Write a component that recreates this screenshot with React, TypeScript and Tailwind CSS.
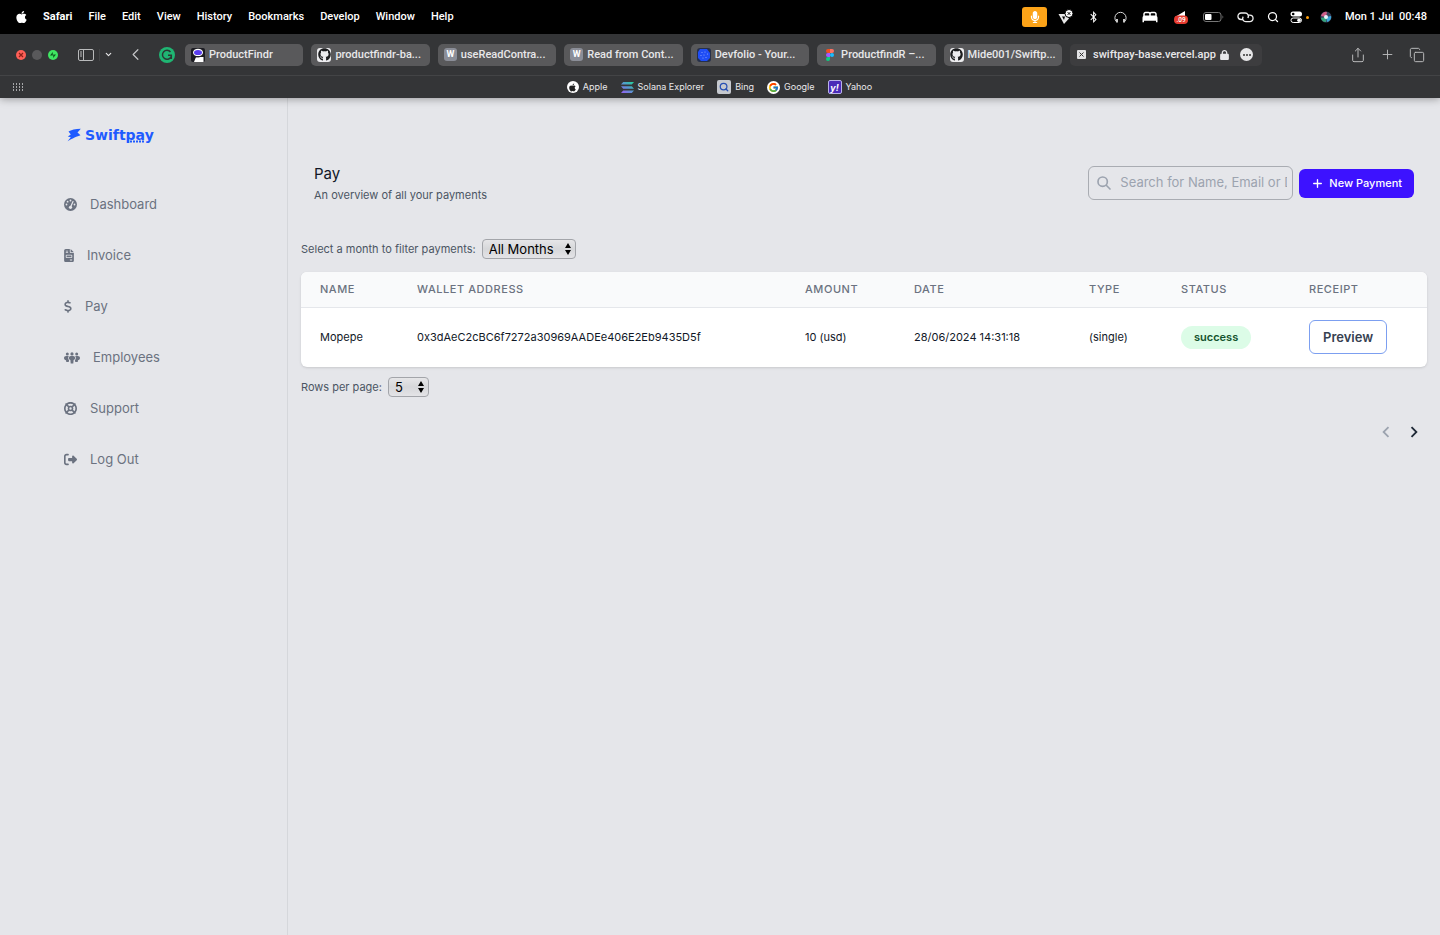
import { memo, useState } from "react";
import type { ReactNode } from "react";
import {
  FaApple,
  FaBluetoothB,
  FaDollarSign,
  FaFileInvoice,
  FaGithub,
  FaLifeRing,
  FaLock,
  FaMicrophone,
  FaRightFromBracket,
} from "react-icons/fa6";
import { FcGoogle } from "react-icons/fc";
import { HiOutlineSearch } from "react-icons/hi";
import { MdBed, MdChevronLeft, MdChevronRight } from "react-icons/md";
import { ChevronDown, ChevronLeft, Copy, Plus, Search, Share } from "lucide-react";

const menus = ["File", "Edit", "View", "History", "Bookmarks", "Develop", "Window", "Help"];

const GithubBadge = () => (
  <span className="flex size-[14px] items-center justify-center rounded-[3px] bg-[#ececee]">
    <FaGithub className="size-[13px] text-[#1d1e20]" />
  </span>
);

const LetterBadge = () => (
  <span className="flex size-[13px] items-center justify-center rounded-[3px] bg-[#8b8e98] text-[9px] font-bold text-white">
    W
  </span>
);

const ProductFindrLogo = () => (
  <svg viewBox="0 0 14 14" className="size-[14px]">
    <rect width="14" height="14" rx="2" fill="#1c1c22" />
    <path d="M5 9h7.500v5H3z" fill="#fff" />
    <ellipse cx="7" cy="4.500" rx="5" ry="3.800" fill="#fff" />
    <ellipse cx="7" cy="4.500" rx="4" ry="2.600" fill="#5a3df0" />
    <path d="M3 8.800h5.500" stroke="#1c1c22" strokeWidth="1.200" />
  </svg>
);

const DevfolioLogo = () => (
  <svg viewBox="0 0 14 14" className="size-[14px]">
    <rect width="14" height="14" rx="3" fill="#26304a" />
    <path d="M3 1h7l3 4v5l-3 3H4l-3-3V4z" fill="#1f4df5" />
    <g fill="#8ea7ff">
      <circle cx="5" cy="4.5" r=".6" />
      <circle cx="8" cy="4" r=".6" />
      <circle cx="10.5" cy="6" r=".6" />
      <circle cx="4" cy="7.5" r=".6" />
      <circle cx="7" cy="7" r=".6" />
      <circle cx="9" cy="9.5" r=".6" />
      <circle cx="6" cy="10" r=".6" />
    </g>
  </svg>
);

const FigmaLogo = () => (
  <svg viewBox="0 0 14 14" className="size-[14px]">
    <path d="M7 1H5a2 2 0 0 0 0 4h2z" fill="#f24e1e" />
    <path d="M7 1h2a2 2 0 0 1 0 4H7z" fill="#ff7262" />
    <path d="M7 5H5a2 2 0 0 0 0 4h2z" fill="#a259ff" />
    <circle cx="9" cy="7" r="2" fill="#1abcfe" />
    <path d="M7 9H5a2 2 0 1 0 2 2z" fill="#0acf83" />
  </svg>
);

const SolanaLogo = () => (
  <svg viewBox="0 0 13 11" className="h-[11px] w-[13px]">
    <defs>
      <linearGradient id="solana" x1="0" y1="1" x2="1" y2="0">
        <stop offset="0" stopColor="#9b5cf6" />
        <stop offset=".5" stopColor="#5a94d0" />
        <stop offset="1" stopColor="#1fd69a" />
      </linearGradient>
    </defs>
    <path
      d="M2.2 0H13l-2.2 2.6H0zM0 4.2h10.8L13 6.8H2.2zM2.2 8.4H13L10.8 11H0z"
      fill="url(#solana)"
    />
  </svg>
);

const tabs: { title: string; icon: ReactNode }[] = [
  { title: "ProductFindr", icon: <ProductFindrLogo /> },
  { title: "productfindr-ba...", icon: <GithubBadge /> },
  { title: "useReadContra...", icon: <LetterBadge /> },
  { title: "Read from Cont...", icon: <LetterBadge /> },
  { title: "Devfolio - Your...", icon: <DevfolioLogo /> },
  { title: "ProductfindR –...", icon: <FigmaLogo /> },
  { title: "Mide001/Swiftp...", icon: <GithubBadge /> },
];

const favourites: { title: string; icon: ReactNode }[] = [
  {
    title: "Apple",
    icon: (
      <span className="flex size-3 items-center justify-center rounded-full bg-white">
        <FaApple className="size-[9px] text-[#222]" />
      </span>
    ),
  },
  { title: "Solana Explorer", icon: <SolanaLogo /> },
  {
    title: "Bing",
    icon: (
      <span className="flex size-[14px] items-center justify-center rounded-xs bg-[#c6c9cf]">
        <Search className="size-[10px] text-[#2850b4]" strokeWidth={3} />
      </span>
    ),
  },
  {
    title: "Google",
    icon: (
      <span className="flex size-[13px] items-center justify-center rounded-full bg-white">
        <FcGoogle className="size-[11px]" />
      </span>
    ),
  },
  {
    title: "Yahoo",
    icon: (
      <span className="flex size-[14px] items-center justify-center rounded-xs border border-[#b9b2e8] bg-[#4a2bb8] text-[9px] leading-none font-bold text-white italic">
        y!
      </span>
    ),
  },
];

const MenuBar = memo(() => (
  <div className="flex h-[34px] items-center justify-between bg-black pr-[13px] pl-4 font-['Roboto','Inter',sans-serif] text-[11px] font-medium text-white">
    <nav className="flex items-center gap-4" aria-label="Menu bar">
      <FaApple className="h-[14px] w-[11px]" />
      <button className="pt-px font-bold">Safari</button>
      {menus.map((menu) => (
        <button key={menu} className="pt-px">
          {menu}
        </button>
      ))}
    </nav>

    <div className="flex items-center">
      <span className="flex h-5 w-[25px] items-center justify-center rounded-[3px] bg-[#fca318]">
        <FaMicrophone className="size-3" />
      </span>
      <svg viewBox="0 0 15 16" className="ml-[11px] h-4 w-[15px]">
        <path d="M.5 5h7L11 9.5 6 15z" fill="#e8e8e8" />
        <path d="M4 7.5h3L6 11z" fill="#000" />
        <circle cx="11" cy="4.5" r="4" fill="#fff" stroke="#000" />
        <path d="m9.6 3.1 2.8 2.8m0-2.8L9.6 5.9" stroke="#000" />
      </svg>
      <FaBluetoothB className="ml-4 h-3 w-[9px]" />
      <svg viewBox="0 0 13 13" className="ml-4 size-[13px]" fill="none" stroke="#ddd">
        <path d="M2.2 10.5A5.6 5.6 0 1 1 10.8 10.5" />
        <path d="M3 8v3.5M10 8v3.5" strokeWidth="1.8" />
      </svg>
      <MdBed className="ml-[14px] size-[18px]" />
      <svg viewBox="0 0 16 16" className="ml-[14px] size-4">
        <path d="M2 8 12 2v6z" fill="#fff" />
        <rect x="1" y="6.5" width="14" height="8.5" rx="4" fill="#e63b30" />
        <text x="8" y="13" fontSize="6.5" textAnchor="middle" fill="#fff">
          .09
        </text>
      </svg>
      <svg viewBox="0 0 21 10" className="ml-[14px] h-[10px] w-[21px]">
        <rect x=".5" y=".5" width="17.5" height="9" rx="2.5" fill="none" stroke="#777" />
        <rect x="2" y="2" width="6.5" height="6" rx="1" fill="#fff" />
        <path d="M19.5 3.5c1 .3 1 2.7 0 3z" fill="#777" />
      </svg>
      <svg
        viewBox="0 0 17 12"
        className="ml-[13px] h-3 w-[17px]"
        fill="none"
        stroke="#eee"
        strokeWidth="1.3"
      >
        <path d="M6 8.500H4.200a3.200 3.200 0 0 1 0-6.500h4a3.200 3.200 0 0 1 2.600 5" />
        <path d="M11 4.200h1.800a3.200 3.200 0 0 1 0 6.500h-4a3.200 3.200 0 0 1-2.600-5" />
      </svg>
      <Search className="ml-[13px] size-3" strokeWidth={2.5} />
      <svg viewBox="0 0 13 12" className="ml-[11px] h-3 w-[13px]">
        <rect x=".5" y=".5" width="11.5" height="5" rx="2.5" fill="#fff" />
        <circle cx="3.2" cy="3" r="1.3" fill="#000" />
        <rect x="1" y="7" width="10.5" height="4.5" rx="2.2" fill="none" stroke="#fff" />
        <circle cx="9" cy="9.2" r="1.8" fill="#fff" />
      </svg>
      <span className="ml-[3px] size-[3px] rounded-full bg-[#ff9f0a]" />
      <svg viewBox="0 0 12 12" className="ml-[11px] size-3">
        <circle cx="6" cy="6" r="5.5" fill="#39415c" />
        <path d="M1 5a5 5 0 0 1 6-4L6 6z" fill="#cf5d86" />
        <path d="M11 5a5 5 0 0 1-4 6L6 6z" fill="#3aa6d8" />
        <path d="M1 7a5 5 0 0 0 5 4V6z" fill="#35a57a" />
        <circle cx="6" cy="6" r="2" fill="#e8f2fb" />
      </svg>
      <span className="ml-3 w-[83px] pt-px text-right whitespace-pre">Mon 1 Jul  00:48</span>
    </div>
  </div>
));

MenuBar.displayName = "MenuBar";

const Toolbar = memo(() => (
  <div className="flex h-[42px] items-center border-b border-[#434446] pr-[15px] pl-4 font-['Roboto','Inter',sans-serif] text-[11px] font-medium text-[#e8e8ea]">
    <div className="flex items-center gap-[6px]">
      <svg viewBox="0 0 10 10" className="size-[10px]">
        <circle cx="5" cy="5" r="5" fill="#fe5f57" />
        <path d="m3 3 4 4m0-4L3 7" stroke="#8c2018" strokeWidth="1.2" />
      </svg>
      <svg viewBox="0 0 10 10" className="size-[10px]">
        <circle cx="5" cy="5" r="5" fill="#59595b" />
      </svg>
      <svg viewBox="0 0 10 10" className="size-[10px]">
        <circle cx="5" cy="5" r="5" fill="#3fe662" />
        <path d="M4.8 2v3.5H2zM5.2 8V4.5H8z" fill="#0c5a1c" />
      </svg>
    </div>
    <button className="ml-5" aria-label="Sidebar">
      <svg viewBox="0 0 16 12" className="h-3 w-4" fill="none" stroke="#b9babb">
        <rect x=".5" y=".5" width="15" height="11" rx="1.5" />
        <path d="M5.5.5v11M2 3h2M2 5h2M2 7h2" />
      </svg>
    </button>
    <span className="ml-[5px] h-3 w-px bg-[#444547]" />
    <button className="ml-1" aria-label="Tab groups">
      <ChevronDown className="size-[9px]" strokeWidth={3} />
    </button>
    <button className="ml-[13px]" aria-label="Back">
      <ChevronLeft className="size-[19px] text-[#c4c5c7]" strokeWidth={1.5} />
    </button>
    <svg viewBox="0 0 16 16" className="mr-[10px] ml-[14px] size-4">
      <circle cx="8" cy="8" r="8" fill="#1fb673" />
      <path
        d="M11.500 5A4.500 4.500 0 1 0 12 9.800M9 8.300h3.300V12"
        fill="none"
        stroke="#2b3a34"
        strokeWidth="1.5"
      />
    </svg>
    <div className="flex min-w-0 flex-1 gap-2">
      {tabs.map((tab) => (
        <button
          key={tab.title}
          className="flex h-[22px] min-w-0 flex-1 items-center gap-1 rounded-[5px] bg-[#59595b] pl-[6px] text-left"
        >
          <span className="shrink-0">{tab.icon}</span>
          <span className="pt-[2px] whitespace-nowrap">{tab.title}</span>
        </button>
      ))}
    </div>
    <div className="ml-2 flex h-[22px] w-48 shrink-0 items-center rounded-[5px] bg-[#3d3d3f] pl-[7px]">
      <span className="flex size-[9px] shrink-0 items-center justify-center rounded-[1px] bg-[#e2e2e4] text-[#333]">
        <svg viewBox="0 0 5 5" className="size-[5px]" stroke="currentColor">
          <path d="m.5.5 4 4m0-4-4 4" />
        </svg>
      </span>
      <a href="#" className="ml-[7px] w-[123px] pt-[2px] whitespace-nowrap">
        swiftpay-base.vercel.app
      </a>
      <FaLock className="ml-1 h-[10px] w-[9px] shrink-0" />
      <button
        className="ml-[11px] flex size-[13px] shrink-0 items-center justify-center gap-px rounded-full bg-[#e6e6e8]"
        aria-label="Page menu"
      >
        <span className="size-[2px] rounded-full bg-[#333]" />
        <span className="size-[2px] rounded-full bg-[#333]" />
        <span className="size-[2px] rounded-full bg-[#333]" />
      </button>
    </div>
    <div className="ml-[88px] flex items-center gap-[14px] text-[#b9babb]">
      <button aria-label="Share">
        <Share className="size-4" strokeWidth={1.5} />
      </button>
      <button aria-label="New tab">
        <Plus className="size-[15px]" strokeWidth={1.5} />
      </button>
      <button aria-label="Tab overview">
        <Copy className="size-4" strokeWidth={1.5} />
      </button>
    </div>
  </div>
));

Toolbar.displayName = "Toolbar";

const FavouritesBar = memo(() => (
  <div className="flex h-[22px] items-center pr-6 pl-[13px] text-[9px] text-[#e8e8ea]">
    <svg viewBox="0 0 10 8" className="h-2 w-[10px]" fill="#a6a7a9">
      {[0, 3, 6].map((y) =>
        [0, 3, 6, 9].map((x) => <rect key={`${x}-${y}`} x={x} y={y} width="1" height="2" />),
      )}
    </svg>
    <nav className="flex flex-1 justify-center gap-[13px]" aria-label="Favourites">
      {favourites.map((item) => (
        <a key={item.title} href="#" className="flex items-center gap-1">
          {item.icon}
          {item.title}
        </a>
      ))}
    </nav>
  </div>
));

FavouritesBar.displayName = "FavouritesBar";

const GaugeIcon = () => (
  <svg viewBox="0 0 13 13" className="size-[13px]">
    <circle cx="6.500" cy="6.500" r="6.500" fill="currentColor" />
    <g fill="#e5e6ea">
      <circle cx="6.500" cy="2.500" r=".9" />
      <circle cx="3.600" cy="3.700" r=".9" />
      <circle cx="2.500" cy="6.500" r=".9" />
      <circle cx="10.500" cy="6.500" r=".9" />
      <circle cx="6.500" cy="9.300" r="1.600" />
    </g>
    <path d="M6.600 9 9 3.600" stroke="#e5e6ea" strokeWidth="1.200" strokeLinecap="round" />
  </svg>
);

const PeopleIcon = () => (
  <svg viewBox="0 0 16 12" className="h-3 w-4" fill="currentColor">
    <circle cx="3.300" cy="1.900" r="1.500" />
    <circle cx="8" cy="1.900" r="1.600" />
    <circle cx="12.700" cy="1.900" r="1.500" />
    <path d="M2.200 3.900H4.800C4.300 4.500 4.200 5.200 4.200 6c0 .9.300 1.600.9 2.200L4.700 10H2.300L2 8.200C.8 7.900 0 7 0 5.900c0-1.200.9-2 2.200-2z" />
    <path d="M13.800 3.900h-2.600c.5.600.6 1.300.6 2.100 0 .9-.3 1.600-.9 2.200l.4 1.800h2.400l.3-1.800c1.200-.3 2-1.200 2-2.300 0-1.200-.9-2-2.200-2z" />
    <path d="M6.800 4h2.400c1.200 0 1.900.9 1.900 2 0 1-.6 1.700-1.500 2l-.3 3.500H6.700L6.400 8c-.9-.3-1.500-1-1.500-2 0-1.100.7-2 1.900-2z" />
  </svg>
);

const links: { label: string; icon: ReactNode }[] = [
  { label: "Dashboard", icon: <GaugeIcon /> },
  { label: "Invoice", icon: <FaFileInvoice className="h-[13px] w-[10px]" /> },
  { label: "Pay", icon: <FaDollarSign className="h-[13px] w-2" /> },
  { label: "Employees", icon: <PeopleIcon /> },
  { label: "Support", icon: <FaLifeRing className="size-[13px]" /> },
  { label: "Log Out", icon: <FaRightFromBracket className="size-[13px]" /> },
];

const Sidebar = memo(() => (
  <aside className="w-72 shrink-0 border-r border-[#d5d7db] pt-[26px]">
    <a
      href="#"
      className="relative ml-[67px] inline-flex items-center gap-1 text-[#1f5bff]"
      aria-label="Swiftpay"
    >
      <svg viewBox="0 0 14 14" className="size-[14px]" fill="currentColor">
        <path d="M1.500 3.600C4 2 8.500.9 13.800.8L10.500 4.600l3 2.600C10.500 8 5 10.500.6 13.300l3.200-4.100L.8 8.400l3-2z" />
      </svg>
      <span className="font-['DejaVu_Sans'] text-[14px] leading-5 font-bold">Swiftpay</span>
      <svg
        viewBox="0 0 18 3"
        className="absolute right-[9px] bottom-[2px] h-[3px] w-[18px]"
        stroke="currentColor"
      >
        <path d="M0 1.500h18" strokeWidth="2" strokeDasharray="2 1" />
      </svg>
    </a>
    <nav className="mt-[31px] ml-16 flex flex-col" aria-label="Main">
      {links.map((link) => (
        <a
          key={link.label}
          href="#"
          className="flex h-[51px] items-center gap-[13px] text-[13px] text-[#6b7280]"
        >
          {link.icon}
          {link.label}
        </a>
      ))}
    </nav>
  </aside>
));

Sidebar.displayName = "Sidebar";

const months = ["All Months", "January", "February", "March", "April", "May", "June", "July"];

type SelectProps = {
  id: string;
  options: string[];
  className: string;
};

const NativeSelect = ({ id, options, className }: SelectProps) => {
  const [value, setValue] = useState(options[0]);

  return (
    <span className="relative flex">
      <select
        id={id}
        value={value}
        onChange={(e) => setValue(e.target.value)}
        className={`h-5 appearance-none rounded-[4px] border border-[#a3a5aa] bg-linear-to-b from-[#e6e6e8] via-[#d6d7da] to-[#e4e4e7] pl-[6px] text-[13px] leading-4 text-black ${className}`}
      >
        {options.map((option) => (
          <option key={option}>{option}</option>
        ))}
      </select>
      <svg
        viewBox="0 0 6 12"
        className="pointer-events-none absolute top-1 right-[5px] h-3 w-[6px]"
      >
        <path d="M3 0l3 5H0zM3 12l3-5H0z" />
      </svg>
    </span>
  );
};

const columns = [
  { label: "Name", width: "w-[97px]" },
  { label: "Wallet Address", width: "" },
  { label: "Amount", width: "w-[109px]" },
  { label: "Date", width: "w-[175px]" },
  { label: "Type", width: "w-[92px]" },
  { label: "Status", width: "w-[128px]" },
  { label: "Receipt", width: "w-[137px]" },
];

const payments = [
  {
    name: "Mopepe",
    wallet: "0x3dAeC2cBC6f7272a30969AADEe406E2Eb9435D5f",
    amount: "10 (usd)",
    date: "28/06/2024 14:31:18",
    type: "(single)",
    status: "success",
  },
];

const PaymentsTable = memo(() => (
  <div className="mt-[13px] overflow-hidden rounded-md bg-white shadow-sm">
    <table className="w-full table-fixed text-left text-[11px] text-[#111827]">
      <thead>
        <tr className="h-[35px] border-b border-[#e5e7eb] bg-[#f9fafb] text-[#6b7280]">
          {columns.map((column) => (
            <th
              key={column.label}
              scope="col"
              className={`pl-[19px] font-medium tracking-wider uppercase ${column.width}`}
            >
              {column.label}
            </th>
          ))}
        </tr>
      </thead>
      <tbody>
        {payments.map((payment) => (
          <tr key={payment.wallet} className="h-[60px]">
            <td className="pl-[19px]">{payment.name}</td>
            <td className="pl-[19px]">{payment.wallet}</td>
            <td className="pl-[19px]">{payment.amount}</td>
            <td className="pl-[19px]">{payment.date}</td>
            <td className="pl-[19px]">{payment.type}</td>
            <td className="pl-[19px]">
              <span className="inline-flex h-[23px] items-center rounded-full bg-[#dcfce7] px-[13px] font-semibold text-[#14532d]">
                {payment.status}
              </span>
            </td>
            <td className="pl-[19px]">
              <button className="h-[34px] rounded-md border border-[#7c9ff0] px-[13px] text-[13px] font-semibold text-[#374151]">
                Preview
              </button>
            </td>
          </tr>
        ))}
      </tbody>
    </table>
  </div>
));

PaymentsTable.displayName = "PaymentsTable";

const PayPage = () => {
  const [query, setQuery] = useState("");

  return (
    <main className="min-w-0 flex-1 px-[13px] pt-16 text-[11px] text-[#4b5563]">
      <header className="flex items-center justify-between px-[13px]">
        <div>
          <h1 className="text-[15px] leading-6 text-[#111827]">Pay</h1>
          <p className="leading-[18px]">An overview of all your payments</p>
        </div>
        <div className="flex items-center gap-[6px]">
          <label className="flex h-[34px] w-[205px] items-center gap-2 rounded-md border border-[#a9acb2] pr-[5px] pl-[7px]">
            <HiOutlineSearch className="size-4 shrink-0 stroke-[2.5] text-[#9ca3af]" />
            <span className="sr-only">Search payments</span>
            <input
              type="text"
              value={query}
              onChange={(e) => setQuery(e.target.value)}
              placeholder="Search for Name, Email or Date"
              className="min-w-0 flex-1 bg-transparent text-[13px] outline-none placeholder:text-[#9ca3af]"
            />
          </label>
          <button className="flex h-[29px] items-center gap-[5px] rounded-md bg-[#3d12ff] px-3 font-medium text-white">
            <Plus className="size-[13px]" strokeWidth={2.5} />
            New Payment
          </button>
        </div>
      </header>

      <div className="mt-[35px] flex items-center gap-[6px]">
        <label htmlFor="month">Select a month to filter payments:</label>
        <NativeSelect id="month" options={months} className="w-[94px]" />
      </div>

      <PaymentsTable />

      <div className="mt-[10px] flex items-center gap-[6px]">
        <label htmlFor="rows">Rows per page:</label>
        <NativeSelect id="rows" options={["5", "10", "20"]} className="w-[41px]" />
      </div>

      <div className="mt-6 flex justify-end gap-[6px] pr-[2px]">
        <button disabled aria-label="Previous page" className="text-[#9ca3af]">
          <MdChevronLeft className="size-[22px]" />
        </button>
        <button aria-label="Next page" className="text-[#1f2937]">
          <MdChevronRight className="size-[22px]" />
        </button>
      </div>
    </main>
  );
};

const App = () => {
  return (
    <div className="flex min-h-screen flex-col bg-[#e5e6ea] font-['Inter','Liberation_Sans',sans-serif]">
      <div className="relative bg-[#343537] shadow-[0_1px_8px_rgba(0,0,0,0.35)]">
        <MenuBar />
        <Toolbar />
        <FavouritesBar />
      </div>
      <div className="flex flex-1">
        <Sidebar />
        <PayPage />
      </div>
    </div>
  );
};

export default App;
